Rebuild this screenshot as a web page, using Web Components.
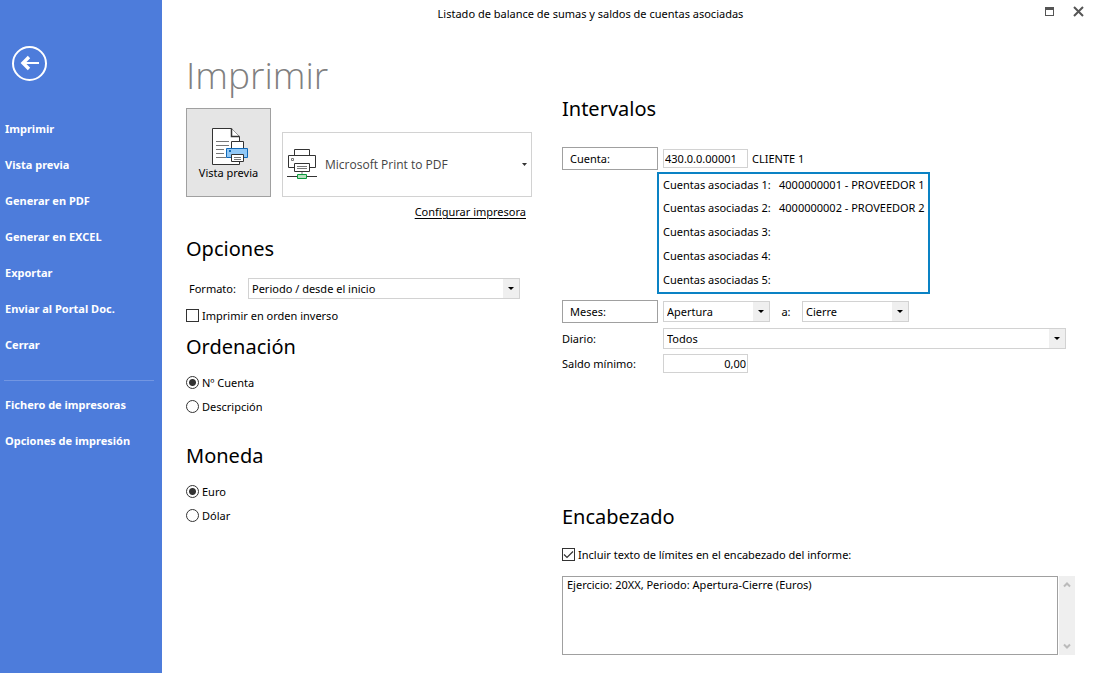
<!DOCTYPE html>
<html lang="es">
<head>
<meta charset="utf-8">
<meta name="viewport" content="width=device-width, initial-scale=1">
<title>Listado de balance de sumas y saldos de cuentas asociadas</title>
<style>
  html, body { margin: 0; min-height: 100%; }
  body {
    font-family: "Noto Sans", "Open Sans", sans-serif;
    font-size: 11px;
    line-height: 16px;
    color: #000;
    background: #fff;
    --accent: #4d7cdb;
    --line: #d2d2d2;
    --line-dark: #a0a0a0;
    --fill: #efefef;
  }
</style>
</head>
<body>
<print-window></print-window>

<script>
const define = (name, html, setup) => {
  const tpl = document.createElement('template');
  tpl.innerHTML = '<style>*{box-sizing:border-box}button,input,select,textarea{font:inherit;color:inherit;margin:0;border-radius:0}</style>' + html;
  customElements.define(name, class extends HTMLElement {
    constructor() {
      super();
      this.attachShadow({ mode: 'open' }).append(tpl.content.cloneNode(true));
    }
    connectedCallback() { if (setup) setup(this, this.shadowRoot); }
  });
};

/* Section with a large heading and slotted content */
define('section-title', `
  <style>
    :host { display: block; }
    h2 { margin: 0; font-size: 20px; line-height: 28px; font-weight: 400; }
  </style>
  <h2><slot></slot></h2>`);

/* Drop-down with an optional label on its left */
define('combo-box', `
  <style>
    :host { display: flex; align-items: center; min-width: 0; }
    label { flex: none; width: var(--label-width, 0); }
    .box { flex: 1; min-width: 0; display: grid; grid-template-columns: minmax(0, 1fr) 16px; height: 21px; border: 1px solid var(--line); }
    select { grid-area: 1 / 1 / 2 / 3; appearance: none; border: 0; background: none; padding: 0 20px 0 3px; width: 100%; height: 19px; outline-offset: -1px; }
    .arrow { grid-area: 1 / 2; background: var(--fill); display: grid; place-items: center; pointer-events: none; }
  </style>
  <label for="s"></label>
  <div class="box">
    <select id="s"></select>
    <span class="arrow"><svg width="6" height="3" viewBox="0 0 6 3"><path d="M0 0h6L3 3z"/></svg></span>
  </div>`, (host, root) => {
  const select = root.querySelector('select');
  const label = root.querySelector('label');
  if (host.hasAttribute('label')) label.textContent = host.getAttribute('label');
  else { label.remove(); select.setAttribute('aria-label', host.getAttribute('name')); }
  select.add(new Option(host.getAttribute('value')));
});

/* Radio group: comma separated options, the first is selected */
define('radio-list', `
  <style>
    :host { display: block; }
    fieldset { border: 0; margin: 0; padding: 0; min-width: 0; }
    label { display: flex; align-items: center; gap: 3px; height: 24px; padding-bottom: 1px; }
    input { appearance: none; flex: none; width: 13px; height: 13px; border: 1px solid #333; border-radius: 50%; background: #fff; }
    input:checked { background: radial-gradient(circle, #333 0 3px, #fff 4px); }
  </style>
  <fieldset></fieldset>`, (host, root) => {
  const set = root.querySelector('fieldset');
  set.setAttribute('aria-label', host.getAttribute('name'));
  host.getAttribute('options').split(',').forEach((text, i) => {
    const label = document.createElement('label');
    const input = document.createElement('input');
    input.type = 'radio'; input.name = 'r'; input.checked = i === 0;
    label.append(input, text);
    set.append(label);
  });
});

define('check-option', `
  <style>
    :host { display: block; }
    label { display: flex; align-items: center; gap: 3px; height: 24px; padding-bottom: 1px; }
    .tick { display: grid; flex: none; width: 13px; height: 13px; }
    input, svg { grid-area: 1 / 1; }
    input { appearance: none; width: 13px; height: 13px; border: 1px solid #333; background: #fff; }
    svg { pointer-events: none; visibility: hidden; }
    input:checked + svg { visibility: visible; }
  </style>
  <label><span class="tick"><input type="checkbox"><svg width="13" height="13" viewBox="0 0 13 13" fill="none" stroke="#333" stroke-width="1.2"><path d="M2 6.500l3 3 6-6"/></svg></span><span><slot></slot></span></label>`,
  (host, root) => { root.querySelector('input').checked = host.hasAttribute('checked'); });

define('side-nav', `
  <style>
    :host { display: block; background: var(--accent); color: #fff; padding: 45px 8px 20px 4px; box-sizing: border-box; }
    button { display: block; margin: 0 0 30px 7px; padding: 0; border: 0; background: none; width: 36px; height: 36px; }
    svg { display: block; }
    nav { display: flex; flex-direction: column; }
    a { color: inherit; text-decoration: none; font-weight: 700; font-size: 11px; line-height: 36px; padding-left: 1px; white-space: nowrap; }
    hr { width: 100%; margin: 17px 0 6px; border: 0; border-top: 1px solid #7296e2; }
  </style>
  <button type="button" aria-label="Volver"><svg width="36" height="36" viewBox="0 0 36 36" fill="none" stroke="#fff"><circle cx="18.500" cy="18.500" r="16.500" stroke-width="2"/><path d="M12 18H28" stroke-width="2"/><path d="M18 12L12 18l6 6" stroke-width="3.400"/></svg></button>
  <nav>
    <a href="#imprimir">Imprimir</a>
    <a href="#vista">Vista previa</a>
    <a href="#pdf">Generar en PDF</a>
    <a href="#excel">Generar en EXCEL</a>
    <a href="#exportar">Exportar</a>
    <a href="#portal">Enviar al Portal Doc.</a>
    <a href="#cerrar">Cerrar</a>
    <hr>
    <a href="#fichero">Fichero de impresoras</a>
    <a href="#opciones">Opciones de impresión</a>
  </nav>`);

define('title-bar', `
  <style>
    :host { display: flex; align-items: center; height: 28px; }
    h1 { flex: 1; margin: 0; font-size: 11px; font-weight: 400; text-align: center; }
    div { flex: none; width: 74px; display: flex; justify-content: flex-end; gap: 14px; padding: 0 7px 8px 0; }
    button { border: 0; padding: 0; background: none; width: 15px; height: 15px; flex: none; }
    svg { display: block; }
  </style>
  <h1>Listado de balance de sumas y saldos de cuentas asociadas</h1>
  <div>
    <button type="button" aria-label="Maximizar"><svg width="15" height="15" viewBox="0 0 15 15"><path d="M3 4h9v9H3zM4 7v5h7V7z" fill="#555" fill-rule="evenodd"/></svg></button>
    <button type="button" aria-label="Cerrar"><svg width="15" height="15" viewBox="0 0 15 15" fill="none" stroke="#555" stroke-width="2"><path d="M3 4l9 9M12 4l-9 9"/></svg></button>
  </div>`);

/* Preview button, printer chooser and set-up link */
define('printer-picker', `
  <style>
    :host { display: block; }
    .row { display: flex; align-items: flex-end; gap: 11px; }
    button { flex: none; width: 85px; height: 89px; padding: 0; border: 1px solid var(--line-dark); background: #e5e5e5; display: flex; flex-direction: column; align-items: center; }
    button svg { display: block; margin-top: 18px; }
    .printer { flex: 1; min-width: 0; display: grid; grid-template-columns: 38px minmax(0, 1fr) 14px; align-items: center; height: 65px; border: 1px solid var(--line); }
    .printer svg { pointer-events: none; justify-self: center; }
    select { grid-area: 1 / 1 / 2 / 4; appearance: none; border: 0; background: none; padding: 0 14px 0 42px; width: 100%; height: 63px; font-family: "Open Sans", sans-serif; font-size: 12px; color: #444; }
    .icon { grid-area: 1 / 1; }
    .arrow { grid-area: 1 / 3; }
    p { margin: 3px 6px 0 0; line-height: 24px; text-align: right; }
    a { color: inherit; text-underline-offset: 2px; }
  </style>
  <div class="row">
    <button type="button">
      <svg width="42" height="38" viewBox="0 0 42 38" fill="#fff" stroke="#333">
        <path d="M4.500 1.500h19l8 8v28h-27z"/>
        <path d="M23.500 1.500v8h8" stroke-width="1.500"/>
        <path d="M8 14.500h13M8 18.500h13M8 22.500h8M8 26.500h8M8 30.500h10" stroke="#777"/>
        <path d="M23.500 21.500v-7h12v7"/>
        <path d="M18.500 21.500h21v9h-21z" fill="#91c8f6" stroke="#1169b8"/>
        <path d="M21 23h2v2h-2z" fill="#1169b8" stroke="none"/>
        <path d="M23.500 27.500h12v7h-12z"/>
        <path d="M26 30.500h7M26 32.500h7" stroke="#777"/>
      </svg>
      <span>Vista previa</span>
    </button>
    <div class="printer">
      <select aria-label="Impresora"><option>Microsoft Print to PDF</option></select>
      <svg class="icon" width="30" height="31" viewBox="0 0 30 31" fill="#fff" stroke="#333">
        <path d="M7.500 6.500v-6h15v6"/>
        <path d="M1.500 6.500h27v12h-27z"/>
        <path d="M4.500 9.500h2v2h-2z" stroke="#777"/>
        <path d="M7.500 14.500h15v8h-15z"/>
        <path d="M10 17.500h10M10 19.500h10" stroke="#777"/>
        <path d="M15 23v3" stroke="#bbb" stroke-width="2"/>
        <path d="M0 27.500h30"/>
        <path d="M10.500 25.500h9v4h-9z" fill="#b8e0c0" stroke="#0a9a3c"/>
      </svg>
      <svg class="arrow" width="5" height="3" viewBox="0 0 5 3"><path d="M0 0h5L2.500 3z" fill="#333"/></svg>
    </div>
  </div>
  <p><a href="#configurar">Configurar impresora</a></p>`);

/* Account range, linked accounts, months, journal and minimum balance */
define('interval-form', `
  <style>
    :host { display: block; }
    .row { display: flex; align-items: center; }
    .pick { flex: none; width: 96px; height: 23px; border: 1px solid var(--line-dark); background: #fff; padding: 0 7px; text-align: left; margin-right: 5px; }
    input { width: 85px; height: 19px; border: 1px solid var(--line); padding: 0 1px; background: #fff; }
    .name { margin-left: 4px; }
    table { margin: 2px 0 6px 95px; border: 2px solid #0a82c4; border-spacing: 0; border-collapse: separate; width: 273px; }
    th, td { font-weight: 400; text-align: left; padding: 0; white-space: nowrap; height: 24px; }
    tr:first-child > * { height: 22px; }
    th { width: 120px; padding-left: 4px; }
    combo-box.month { flex: none; width: 107px; }
    .to { width: 32px; text-align: center; }
    .journal { margin: 5px 9px 5px 0; --label-width: 101px; }
    .min label { width: 101px; }
    .min input { text-align: right; }
  </style>
  <div class="row">
    <button class="pick" type="button">Cuenta:</button>
    <input type="text" aria-label="Cuenta" value="430.0.0.00001">
    <span class="name">CLIENTE 1</span>
  </div>
  <table>
    <tr><th scope="row">Cuentas asociadas 1:</th><td>4000000001 - PROVEEDOR 1</td></tr>
    <tr><th scope="row">Cuentas asociadas 2:</th><td>4000000002 - PROVEEDOR 2</td></tr>
    <tr><th scope="row">Cuentas asociadas 3:</th><td></td></tr>
    <tr><th scope="row">Cuentas asociadas 4:</th><td></td></tr>
    <tr><th scope="row">Cuentas asociadas 5:</th><td></td></tr>
  </table>
  <div class="row">
    <button class="pick" type="button">Meses:</button>
    <combo-box class="month" name="Mes inicial" value="Apertura"></combo-box>
    <span class="to">a:</span>
    <combo-box class="month" name="Mes final" value="Cierre"></combo-box>
  </div>
  <combo-box class="journal" label="Diario:" value="Todos"></combo-box>
  <div class="row min">
    <label for="min">Saldo mínimo:</label>
    <input id="min" type="text" value="0,00">
  </div>`);

define('header-text', `
  <style>
    :host { display: block; }
    .row { display: flex; gap: 1px; margin-top: 9px; }
    textarea { flex: 1; min-width: 0; height: 79px; resize: none; overflow: hidden; border: 1px solid var(--line-dark); padding: 0 4px; background: #fff; display: block; }
    .bar { flex: none; width: 16px; background: var(--fill); display: flex; flex-direction: column; justify-content: space-between; align-items: center; padding: 5px 0; }
    svg { display: block; }
  </style>
  <check-option checked>Incluir texto de límites en el encabezado del informe:</check-option>
  <div class="row">
    <textarea aria-label="Texto del encabezado">Ejercicio: 20XX, Periodo: Apertura-Cierre (Euros)</textarea>
    <div class="bar">
      <svg width="8" height="7" viewBox="0 0 8 7" fill="none" stroke="#bbb" stroke-width="2"><path d="M1 5.500l3-3 3 3"/></svg>
      <svg width="8" height="7" viewBox="0 0 8 7" fill="none" stroke="#bbb" stroke-width="2"><path d="M1 1.500l3 3 3-3"/></svg>
    </div>
  </div>`);

define('print-window', `
  <style>
    :host { display: grid; grid-template-columns: 162px minmax(0, 1fr); min-height: 100vh; }
    .columns { display: grid; grid-template-columns: minmax(0, 346fr) minmax(0, 513fr); column-gap: 30px; padding: 23px 18px 18px 24px; }
    h1 { margin: 0 0 9px; font-family: "Open Sans", sans-serif; font-size: 37px; line-height: 48px; font-weight: 300; color: #808080; }
    .right { padding-top: 44px; }
    .format { margin: 15px 12px 5px 3px; --label-width: 59px; }
    .options { margin-top: 11px; }
    .order { margin: 5px 0 10px; }
    .currency { margin: 23px 0 10px; }
    .intervals { margin-bottom: 24px; }
    .heading { margin: 130px 0 12px; }
  </style>
  <side-nav></side-nav>
  <main>
    <title-bar></title-bar>
    <div class="columns">
      <div>
        <h1>Imprimir</h1>
        <printer-picker></printer-picker>
        <section-title class="options">Opciones</section-title>
        <combo-box class="format" label="Formato:" value="Periodo / desde el inicio"></combo-box>
        <check-option>Imprimir en orden inverso</check-option>
        <section-title class="order">Ordenación</section-title>
        <radio-list name="Ordenación" options="Nº Cuenta,Descripción"></radio-list>
        <section-title class="currency">Moneda</section-title>
        <radio-list name="Moneda" options="Euro,Dólar"></radio-list>
      </div>
      <div class="right">
        <section-title class="intervals">Intervalos</section-title>
        <interval-form></interval-form>
        <section-title class="heading">Encabezado</section-title>
        <header-text></header-text>
      </div>
    </div>
  </main>`);
</script>
</body>
</html>
